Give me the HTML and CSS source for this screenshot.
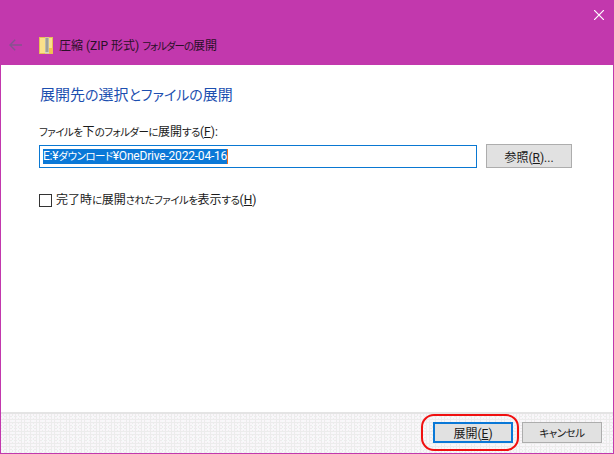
FILE: index.html
```html
<!DOCTYPE html>
<html lang="ja">
<head>
<meta charset="utf-8">
<title>圧縮 (ZIP 形式) フォルダーの展開</title>
<link rel="stylesheet" href="styles.css">
</head>
<body>
<div class="window">
  <header class="titlebar">
    <div class="caption">
      <svg class="close" width="10" height="10" viewBox="0 0 10 10"><path d="M0 0L10 10M10 0L0 10" stroke="#fff" stroke-width="1.2" fill="none"/></svg>
    </div>
    <div class="navrow">
      <svg class="back" width="13" height="12" viewBox="0 0 13 12"><path d="M6.2 .8L1 6l5.2 5.2M1 6H13" stroke="#86528f" stroke-width="1.4" fill="none"/></svg>
      <svg class="zip" width="14" height="17" viewBox="0 0 14 17">
        <rect x="0.5" y="0.5" width="13" height="16" fill="#fbe08a" stroke="#e6bf55"/>
        <rect x="9.5" y="11" width="4" height="5.5" fill="#f3c34e"/>
        <rect x="6" y="0.5" width="4" height="16" fill="#d4d2c8"/>
        <path d="M6.5 2h3M6.5 4h3M6.5 6h3M6.5 8h3M6.5 10h3M6.5 12h3M6.5 14h3" stroke="#6f6d66" stroke-width="1"/>
      </svg>
      <span class="wintitle">圧縮 (ZIP 形式) <span class="kn">フォルダーの</span>展開</span>
    </div>
  </header>
  <main class="content">
    <h1 class="heading">展開先<span class="kn">の</span>選択<span class="kn">とファイルの</span>展開</h1>
    <label class="fieldlabel"><span class="kn">ファイルを</span>下<span class="kn">のフォルダーに</span>展開<span class="kn">する</span>(<u>F</u>):</label>
    <div class="pathrow">
      <div class="pathinput"><span class="selected">E:¥<span class="kn">ダウンロード</span>¥OneDrive-2022-04-16</span></div>
      <button class="btn browse">参照(<u>R</u>)...</button>
    </div>
    <div class="checkrow">
      <span class="checkbox"></span>
      <span>完了時<span class="kn">に</span>展開<span class="kn">されたファイルを</span>表示<span class="kn">する</span>(<u>H</u>)</span>
    </div>
  </main>
  <footer class="footer">
    <div class="highlight"><button class="btn primary">展開(<u>E</u>)</button></div>
    <button class="btn cancel"><span class="kn">キャンセル</span></button>
  </footer>
</div>
</body>
</html>
```
FILE: styles.css
```css
* { box-sizing: border-box; }
html, body { margin: 0; padding: 0; }
body { width: 614px; height: 454px; overflow: hidden; font-family: Roboto, "Noto Sans CJK JP", sans-serif; font-feature-settings: "palt"; font-size: 12px; color: #1a1a1a; }
u { text-underline-offset: 1px; }
.kn { font-size: 10.5px; letter-spacing: -.5px; }
.window { width: 614px; height: 454px; background: #c238ad; padding: 0 1px 1px; display: flex; flex-direction: column; }
.titlebar { height: 65px; display: flex; flex-direction: column; flex: none; }
.caption { height: 29px; display: flex; justify-content: flex-end; align-items: flex-start; padding: 10px 9px 0 0; }
.navrow { height: 36px; display: flex; align-items: flex-start; padding: 7px 0 0 8px; }
.back { margin-top: 3px; }
.zip { margin-left: 17px; margin-top: 1px; }
.wintitle { margin: 2px 0 0 6px; font-size: 12px; line-height: 17px; color: #2a1028; }
.wintitle .kn { letter-spacing: -1px; }
.content { flex: 1; background: #fff; padding: 19px 0 0 38px; display: flex; flex-direction: column; }
.heading { margin: 0 0 18px; padding-left: 1px; font-size: 15px; font-weight: 400; line-height: 22px; color: #1c4fb0; }
.heading .kn { font-size: 14px; letter-spacing: 0; }
.fieldlabel { line-height: 17px; }
.pathrow { display: flex; align-items: flex-end; margin-top: 3px; }
.pathinput { width: 438px; height: 23px; border: 1px solid #0a78d2; padding: 3px 0 0 3px; line-height: 15px; background: #fff; }
.selected { display: block; width: fit-content; height: 15px; line-height: 15px; letter-spacing: -.2px; background: #0a78d7; color: #fff; border-right: 1px solid #f07020; }
.btn { font: inherit; font-feature-settings: inherit; color: #1a1a1a; background: #e1e1e1; border: 1px solid #adadad; padding: 0; height: 24px; }
.browse { width: 86px; margin-left: 9px; }
.checkrow { display: flex; align-items: center; gap: 4px; margin-top: 24px; line-height: 17px; }
.checkbox { width: 13px; height: 13px; border: 1px solid #333; background: #fff; }
.footer { height: 41px; flex: none; background: radial-gradient(circle at 1px 1px, #faf6fa .7px, transparent .8px) 0 0 / 3px 3px, radial-gradient(circle at 1px 1px, #f7fbfb .7px, transparent .8px) 1px 2px / 5px 4px, #ececec; border-top: 2px solid #e4e4e4; display: flex; justify-content: flex-end; align-items: center; padding: 0 11px 2px 0; }
.highlight { width: 98px; height: 37px; border: 2px solid #f01010; border-radius: 13px; display: flex; align-items: center; justify-content: flex-end; padding-right: 4px; margin-right: 3px; }
.primary { width: 80px; height: 21px; border: 2px solid #0a78d7; }
.cancel { width: 80px; height: 21px; }
```
